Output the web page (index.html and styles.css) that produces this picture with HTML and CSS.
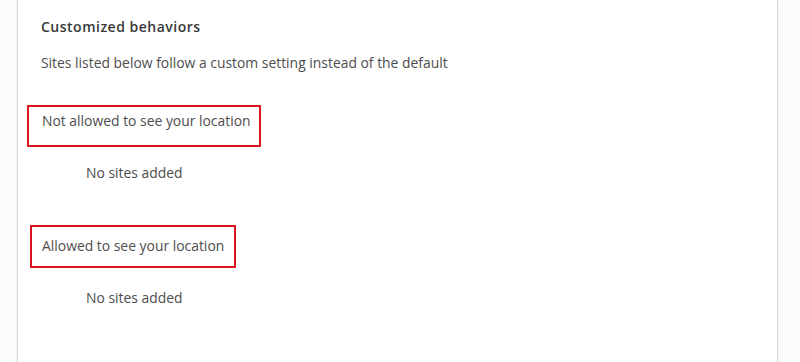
FILE: index.html
```html
<!DOCTYPE html>
<html lang="en">
<head>
<meta charset="utf-8">
<title>Customized behaviors</title>
<link rel="stylesheet" href="styles.css">
</head>
<body>
<div class="card">
  <h2 class="heading">Customized behaviors</h2>
  <p class="desc">Sites listed below follow a custom setting instead of the default</p>
  <div class="group group-first">
    <div class="label-box box-1">Not allowed to see your location</div>
    <div class="empty empty-first">No sites added</div>
  </div>
  <div class="group group-second">
    <div class="label-box box-2">Allowed to see your location</div>
    <div class="empty empty-second">No sites added</div>
  </div>
</div>
</body>
</html>
```
FILE: styles.css
```css
html, body {
  margin: 0;
  padding: 0;
  background: #fbfbfb;
  height: 362px;
  overflow: hidden;
}
body {
  font-family: "Open Sans", "Noto Sans", sans-serif;
  font-size: 13.9px;
  color: #4d4d4d;
}
.card {
  margin-left: 17px;
  width: 761px;
  height: 362px;
  box-sizing: border-box;
  background: #fff;
  border-left: 1px solid #d6d6d6;
  border-right: 1px solid #d6d6d6;
  box-shadow: 0 0 3px rgba(0,0,0,0.08);
  padding: 17px 0 0 23px;
}
.heading {
  margin: 0;
  font-size: 14px;
  font-weight: 600;
  letter-spacing: 0.5px;
  color: #383838;
  line-height: 20px;
}
.desc {
  margin: 16px 0 0;
  line-height: 20px;
}
.group-first {
  margin-top: 32px;
}
.group-second {
  margin-top: 42px;
}
.label-box {
  box-sizing: border-box;
  border: 2px solid #d9141e;
  line-height: 20px;
}
.box-1 {
  margin-left: -14px;
  width: 234px;
  height: 42px;
  padding: 4px 0 0 13px;
}
.box-2 {
  margin-left: -11px;
  width: 206px;
  height: 43px;
  padding: 9px 0 0 10px;
}
.empty {
  margin-left: 45px;
  line-height: 20px;
}
.empty-first {
  margin-top: 16px;
}
.empty-second {
  margin-top: 20px;
}
```
